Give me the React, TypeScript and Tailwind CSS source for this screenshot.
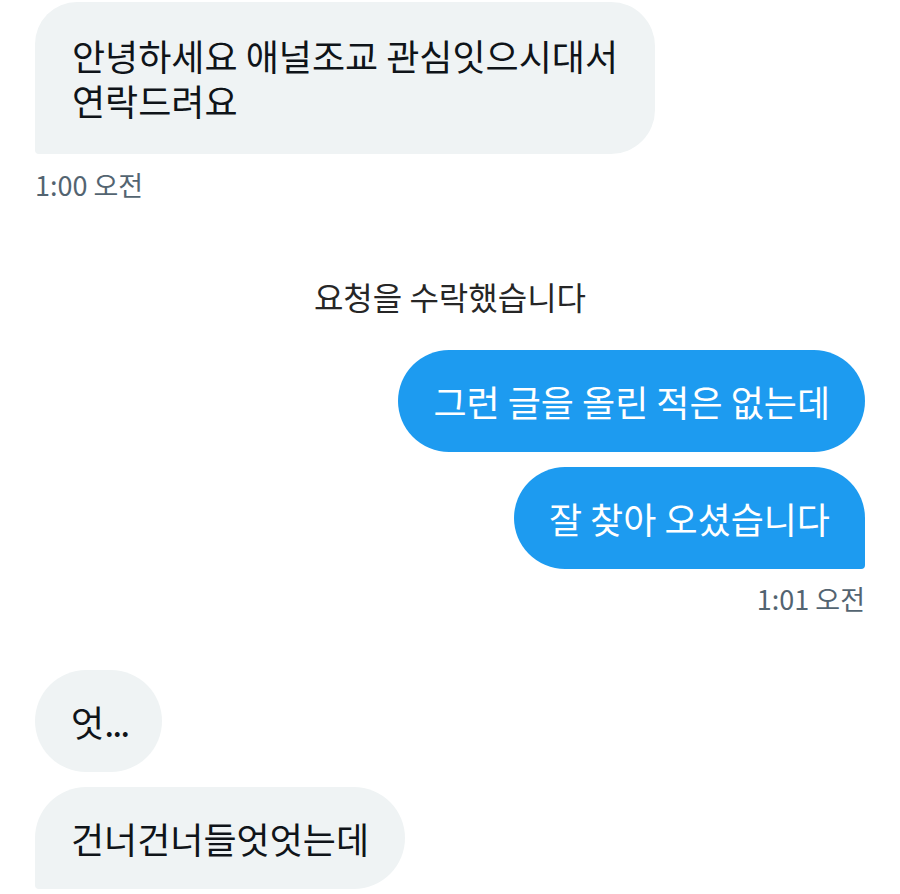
import React from "react";

const font = { fontFamily: '"Noto Sans CJK KR", "Noto Sans", sans-serif' };

export default function App() {
  return (
    <div
      className="w-[900px] h-[894px] overflow-hidden bg-white px-[35px] flex flex-col text-[#0f1419]"
      style={font}
    >
      <div className="pt-[2px] flex flex-col items-start">
        <div className="bg-[#eff3f4] rounded-tl-[42px] rounded-tr-[44px] rounded-br-[44px] rounded-bl-[4px] pl-[37px] pr-[37px] pt-[31px] pb-[31px] text-[36px] leading-[45px]">
          <div className="h-[45px] overflow-visible">안녕하세요 애널조교 관심잇으시대서</div>
          <div className="h-[45px] overflow-visible">연락드려요</div>
        </div>
        <div className="mt-[16px] text-[27px] leading-[30px] text-[#536471]">1:00 오전</div>
      </div>

      <div className="mt-[78px] text-center text-[32px] leading-[36px] text-[#262626]">
        요청을 수락했습니다
      </div>

      <div className="mt-[36px] flex flex-col items-end gap-[15px]">
        <div className="bg-[#1d9bf0] text-white rounded-[52px] px-[35px] py-[29px] text-[36px] leading-[44px]">
          그런 글을 올린 적은 없는데
        </div>
        <div className="bg-[#1d9bf0] text-white rounded-tl-[52px] rounded-tr-[52px] rounded-bl-[52px] rounded-br-[4px] px-[35px] py-[29px] text-[36px] leading-[44px]">
          잘 찾아 오셨습니다
        </div>
        <div className="text-[27px] leading-[30px] text-[#536471]">1:01 오전</div>
      </div>

      <div className="mt-[56px] flex flex-col items-start gap-[15px]">
        <div className="bg-[#eff3f4] rounded-[52px] pl-[36px] pr-[34px] py-[29px] text-[36px] leading-[44px]">
          엇<span className="tracking-[-2px]">...</span>
        </div>
        <div className="bg-[#eff3f4] rounded-tl-[52px] rounded-tr-[52px] rounded-br-[52px] rounded-bl-[4px] px-[36px] py-[29px] text-[36px] leading-[44px]">
          건너건너들엇엇는데
        </div>
      </div>
    </div>
  );
}
